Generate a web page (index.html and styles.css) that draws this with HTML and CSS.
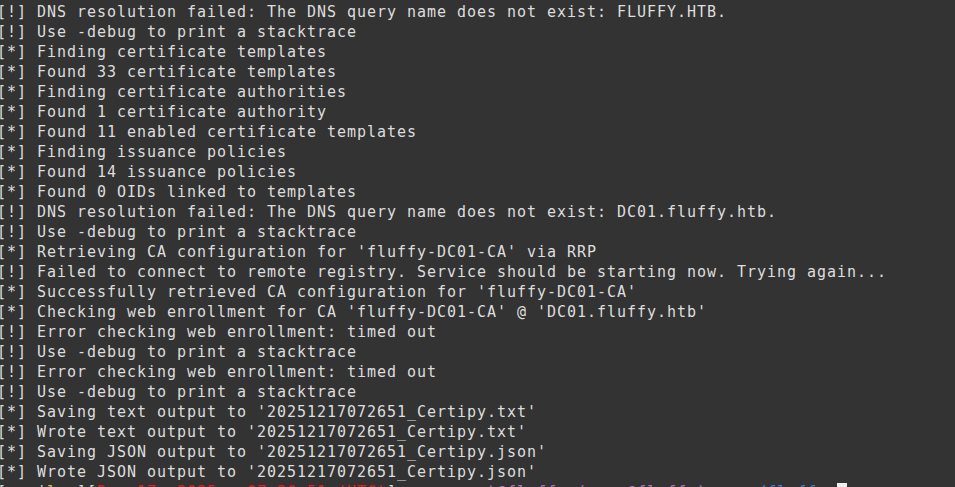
FILE: index.html
```html
<!DOCTYPE html>
<html>
<head>
<meta charset="utf-8">
<link rel="stylesheet" href="styles.css">
</head>
<body>
<div class="term">
<div class="line">[!] DNS resolution failed: The DNS query name does not exist: FLUFFY.HTB.</div>
<div class="line">[!] Use -debug to print a stacktrace</div>
<div class="line">[*] Finding certificate templates</div>
<div class="line">[*] Found 33 certificate templates</div>
<div class="line">[*] Finding certificate authorities</div>
<div class="line">[*] Found 1 certificate authority</div>
<div class="line">[*] Found 11 enabled certificate templates</div>
<div class="line">[*] Finding issuance policies</div>
<div class="line">[*] Found 14 issuance policies</div>
<div class="line">[*] Found 0 OIDs linked to templates</div>
<div class="line">[!] DNS resolution failed: The DNS query name does not exist: DC01.fluffy.htb.</div>
<div class="line">[!] Use -debug to print a stacktrace</div>
<div class="line">[*] Retrieving CA configuration for 'fluffy-DC01-CA' via RRP</div>
<div class="line">[!] Failed to connect to remote registry. Service should be starting now. Trying again...</div>
<div class="line">[*] Successfully retrieved CA configuration for 'fluffy-DC01-CA'</div>
<div class="line">[*] Checking web enrollment for CA 'fluffy-DC01-CA' @ 'DC01.fluffy.htb'</div>
<div class="line">[!] Error checking web enrollment: timed out</div>
<div class="line">[!] Use -debug to print a stacktrace</div>
<div class="line">[!] Error checking web enrollment: timed out</div>
<div class="line">[!] Use -debug to print a stacktrace</div>
<div class="line">[*] Saving text output to '20251217072651_Certipy.txt'</div>
<div class="line">[*] Wrote text output to '20251217072651_Certipy.txt'</div>
<div class="line">[*] Saving JSON output to '20251217072651_Certipy.json'</div>
<div class="line">[*] Wrote JSON output to '20251217072651_Certipy.json'</div>
<div class="line prompt"><span class="dim">[ eui</span><span class="yel">l</span><span class="dim">  ][</span><span class="red">Dec 17, 2025 - 07:26:51 (UTC)</span><span class="dim">]  -── </span><span class="pur">cert@fluffy (user@fluffy)</span><span class="dim">    </span><span class="blu">~/fluffy</span><span class="dim"> </span><span class="cursor"> </span></div>
</div>
</body>
</html>
```
FILE: styles.css
```css
html, body {
  margin: 0;
  padding: 0;
  background: #333333;
  overflow: hidden;
}
.term {
  margin-left: -3px;
  padding-top: 2px;
  font-family: "DejaVu Sans Mono", "Liberation Mono", monospace;
  font-size: 15px;
  letter-spacing: 0.97px;
  line-height: 20px;
  color: #dedede;
}
.line {
  white-space: pre;
  height: 20px;
}
.dim { color: #d8d8d8; }
.yel { color: #d7c04a; }
.red { color: #e0201c; }
.pur { color: #b078b8; }
.blu { color: #3f82d0; }
.cursor {
  background: #f0f0f0;
}
```
